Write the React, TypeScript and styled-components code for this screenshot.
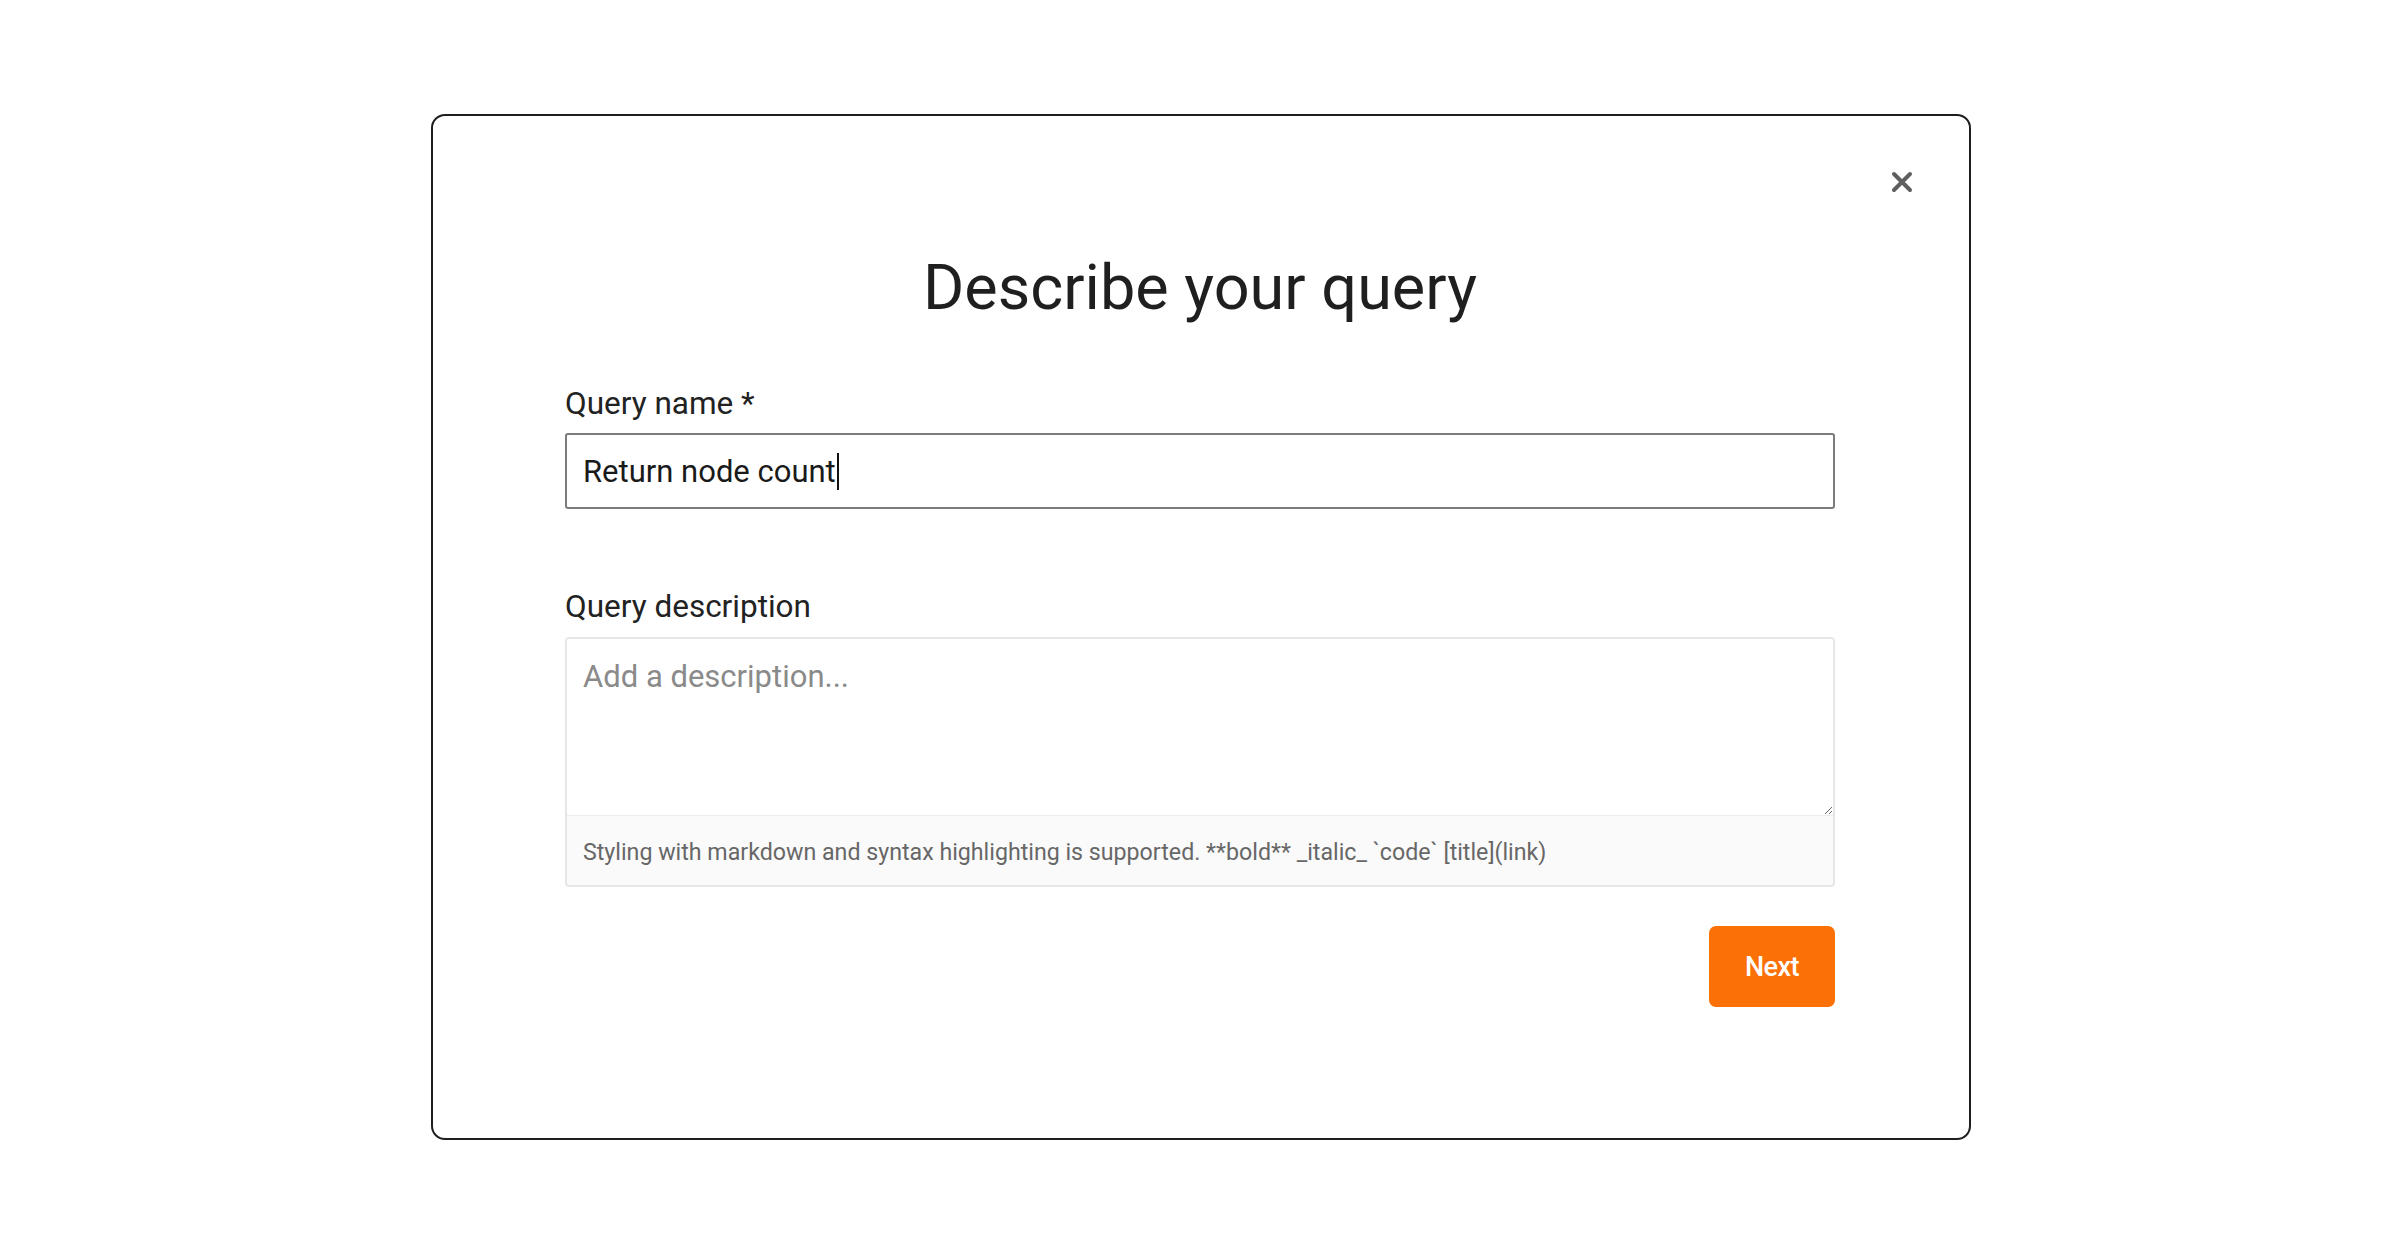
import styled, { createGlobalStyle } from "styled-components";

const GlobalStyle = createGlobalStyle`
  html, body {
    margin: 0;
    padding: 0;
    background: #ffffff;
  }
  body {
    font-family: Roboto, "Liberation Sans", Arial, sans-serif;
    color: #222;
  }
`;

const Page = styled.div`
  min-height: 100vh;
  padding: 114px 0 0 2px;
  box-sizing: border-box;
`;

const Modal = styled.div`
  position: relative;
  width: 1540px;
  margin: 0 auto;
  box-sizing: border-box;
  border: 2px solid #1e1e1e;
  border-radius: 14px;
  background: #fff;
  padding: 134px 134px 131px 132px;
  display: flex;
  flex-direction: column;
`;

const CloseButton = styled.button`
  position: absolute;
  top: 51px;
  right: 52px;
  width: 30px;
  height: 30px;
  padding: 0;
  border: none;
  background: transparent;
  display: flex;
  align-items: center;
  justify-content: center;
  cursor: pointer;
`;

const Title = styled.h1`
  margin: 0 0 59px;
  font-size: 63px;
  line-height: 1.2;
  font-weight: 400;
  text-align: center;
  color: #1f1f1f;
`;

const Field = styled.div<{ gap?: number }>`
  display: flex;
  flex-direction: column;
  margin-bottom: ${({ gap }) => gap ?? 0}px;
`;

const Label = styled.label`
  font-size: 31.5px;
  line-height: 1.2;
  color: #222;
  margin-bottom: 11px;
`;

const InputBox = styled.div`
  height: 76px;
  box-sizing: border-box;
  border: 2px solid #7b7b7b;
  border-radius: 3px;
  padding: 0 16px;
  display: flex;
  align-items: center;
  font-size: 31px;
  line-height: 1.2;
  color: #1a1a1a;
`;

const Caret = styled.span`
  display: inline-block;
  width: 2px;
  height: 37px;
  margin-left: 1px;
  background: #111;
`;

const EditorBox = styled.div`
  border: 2px solid #e6e6e6;
  border-radius: 4px;
  overflow: hidden;
  display: flex;
  flex-direction: column;
`;

const TextArea = styled.textarea`
  height: 176px;
  box-sizing: border-box;
  border: none;
  outline: none;
  padding: 19px 16px;
  font-family: Roboto, "Liberation Sans", Arial, sans-serif;
  font-size: 31px;
  line-height: 1.2;
  color: #222;
  resize: vertical;
  display: block;

  &::placeholder {
    color: #8a8a8a;
  }
`;

const Hint = styled.div`
  border-top: 1px solid #ececec;
  background: #fafafa;
  padding: 23px 16px 18px;
  font-size: 23.2px;
  line-height: 1.2;
  color: #676767;
`;

const Actions = styled.div`
  display: flex;
  justify-content: flex-end;
  margin-top: 39px;
`;

const PrimaryButton = styled.button`
  width: 126px;
  height: 81px;
  border: none;
  border-radius: 7px;
  background: #fb7105;
  color: #fff;
  font-family: Roboto, "Liberation Sans", Arial, sans-serif;
  font-size: 27px;
  font-weight: 500;
  letter-spacing: -0.5px;
  cursor: pointer;
`;

export default function App() {
  return (
    <>
      <GlobalStyle />
      <Page>
        <Modal>
          <CloseButton aria-label="Close">
            <svg width="22" height="22" viewBox="0 0 22 22">
              <path
                d="M3 3 L19 19 M19 3 L3 19"
                stroke="#5f5f5f"
                strokeWidth="4"
                strokeLinecap="round"
              />
            </svg>
          </CloseButton>
          <Title>Describe your query</Title>
          <Field gap={79}>
            <Label>Query name *</Label>
            <InputBox>
              Return node count
              <Caret />
            </InputBox>
          </Field>
          <Field>
            <Label>Query description</Label>
            <EditorBox>
              <TextArea placeholder="Add a description..." />
              <Hint>
                Styling with markdown and syntax highlighting is supported.
                **bold** _italic_ `code` [title](link)
              </Hint>
            </EditorBox>
          </Field>
          <Actions>
            <PrimaryButton>Next</PrimaryButton>
          </Actions>
        </Modal>
      </Page>
    </>
  );
}
